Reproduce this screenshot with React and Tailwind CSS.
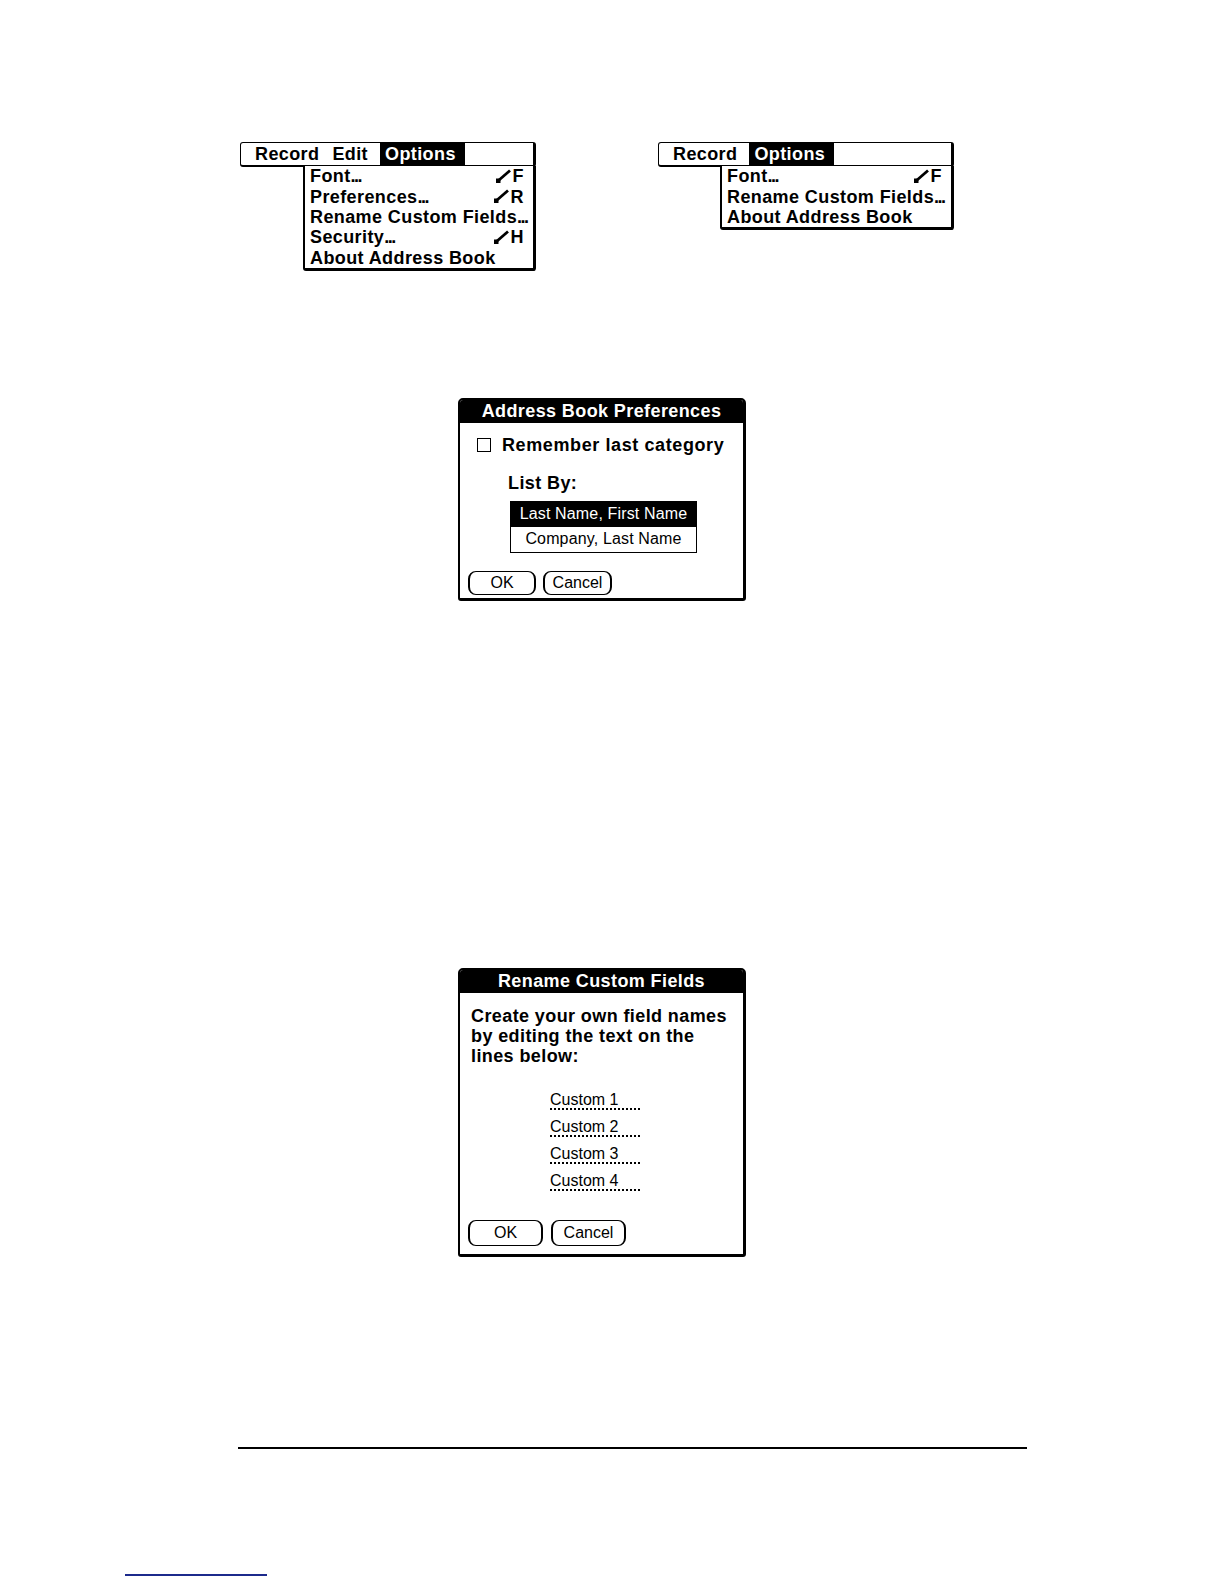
import React from 'react';

const palm = { fontFamily: '"Liberation Sans", Arial, sans-serif' };

const Stroke = () => (
  <svg width="17" height="15" viewBox="0 0 17 15" className="inline-block">
    <path d="M3.5 11.5 L15 1.5" stroke="black" strokeWidth="2.8" fill="none" />
    <rect x="1" y="9.5" width="4.5" height="4.5" fill="black" />
  </svg>
);

// narrow Palm-style ellipsis
const Dots = () => <span className="tracking-[-1.5px]">...</span>;

const MenuItem = ({ label, dots, keyChar }) => (
  <div className="h-[20.4px] flex items-center justify-between pl-[5px] pr-[9px] leading-none whitespace-nowrap">
    <span>
      {label}
      {dots && <Dots />}
    </span>
    {keyChar && (
      <span className="flex items-center gap-[1px]">
        <Stroke />
        <span>{keyChar}</span>
      </span>
    )}
  </div>
);

const Menu = ({ titles, active, items, dropLeft }) => (
  <div className="w-[296px] text-[18px] font-bold tracking-[0.4px] text-black" style={palm}>
    <div className="h-[25px] border border-black border-r-[3px] border-b-2 rounded-[3px] flex items-stretch pl-[13px] whitespace-nowrap">
      {titles.map((t) => (
        <div
          key={t}
          className={
            t === active
              ? 'bg-black text-white px-[5px] flex items-center w-[85px]'
              : 'px-[1px] mr-[11px] flex items-center'
          }
        >
          {t}
        </div>
      ))}
    </div>
    <div
      className="border-l-2 border-r-[3px] border-b-[3px] border-black rounded-b-[3px] bg-white -mt-[1px]"
      style={{ marginLeft: dropLeft }}
    >
      {items.map((it) => (
        <MenuItem key={it.label} label={it.label} dots={it.dots} keyChar={it.key} />
      ))}
    </div>
  </div>
);

const Button = ({ children, w, h }) => (
  <div
    className="border border-black border-x-2 rounded-[8px] flex items-center justify-center text-[16px] font-normal"
    style={{ width: w, height: h }}
  >
    {children}
  </div>
);

const Dialog = ({ title, height, children }) => (
  <div
    className="w-[288px] border-2 border-black border-r-[3px] border-b-[3px] rounded-t-[5px] rounded-b-[3px] flex flex-col text-black overflow-hidden"
    style={{ ...palm, height }}
  >
    <div className="h-[23px] shrink-0 bg-black text-white font-bold text-[18px] tracking-[0.4px] flex items-center justify-center leading-none whitespace-nowrap">
      {title}
    </div>
    {children}
  </div>
);

export default function App() {
  return (
    <div className="w-full h-[1584px] bg-white flex flex-col overflow-hidden">
      <div className="flex items-start pt-[142px] pl-[240px] gap-[122px] shrink-0">
        <Menu
          titles={['Record', 'Edit', 'Options']}
          active="Options"
          dropLeft="63px"
          items={[
            { label: 'Font', dots: true, key: 'F' },
            { label: 'Preferences', dots: true, key: 'R' },
            { label: 'Rename Custom Fields', dots: true },
            { label: 'Security', dots: true, key: 'H' },
            { label: 'About Address Book' },
          ]}
        />
        <Menu
          titles={['Record', 'Options']}
          active="Options"
          dropLeft="62px"
          items={[
            { label: 'Font', dots: true, key: 'F' },
            { label: 'Rename Custom Fields', dots: true },
            { label: 'About Address Book' },
          ]}
        />
      </div>

      <div className="ml-[458px] mt-[127px] shrink-0">
        <Dialog title="Address Book Preferences" height={203}>
          <div className="flex items-center mt-[13px] pl-[17px] gap-[11px]">
            <div className="w-[14px] h-[14px] border-[1.5px] border-black"></div>
            <span className="font-bold text-[18px] tracking-[0.6px] leading-none whitespace-nowrap">
              Remember last category
            </span>
          </div>
          <div className="pl-[48px] mt-[20px] font-bold text-[18px] tracking-[0.4px] leading-none">List By:</div>
          <div className="ml-[50px] mt-[9px] w-[187px] border border-black text-[16px] tracking-[0.15px]">
            <div className="h-[25px] bg-black text-white flex items-center justify-center">
              Last Name, First Name
            </div>
            <div className="h-[25px] flex items-center justify-center">Company, Last Name</div>
          </div>
          <div className="flex gap-[7px] pl-[8px] mt-[18px]">
            <Button w={68} h={24}>OK</Button>
            <Button w={69} h={24}>Cancel</Button>
          </div>
        </Dialog>
      </div>

      <div className="ml-[458px] mt-[367px] shrink-0">
        <Dialog title="Rename Custom Fields" height={289}>
          <div className="pl-[11px] pt-[13px] font-bold text-[18px] tracking-[0.4px] leading-[20px] whitespace-nowrap">
            <div>Create your own field names</div>
            <div>by editing the text on the</div>
            <div>lines below:</div>
          </div>
          <div className="flex flex-col pl-[90px] mt-[24px] gap-[7px] text-[16px]">
            {['Custom 1', 'Custom 2', 'Custom 3', 'Custom 4'].map((c) => (
              <div key={c} className="w-[90px] h-[20px] border-b-2 border-dotted border-black leading-[20px]">
                {c}
              </div>
            ))}
          </div>
          <div className="flex gap-[8px] pl-[8px] mt-[29px]">
            <Button w={75} h={26}>OK</Button>
            <Button w={75} h={26}>Cancel</Button>
          </div>
        </Dialog>
      </div>

      <div className="ml-[238px] mt-[190px] w-[789px] h-[2px] bg-black shrink-0"></div>
      <div className="ml-[125px] mt-[125px] w-[142px] h-[2px] bg-[#1c2a8c] shrink-0"></div>
    </div>
  );
}
